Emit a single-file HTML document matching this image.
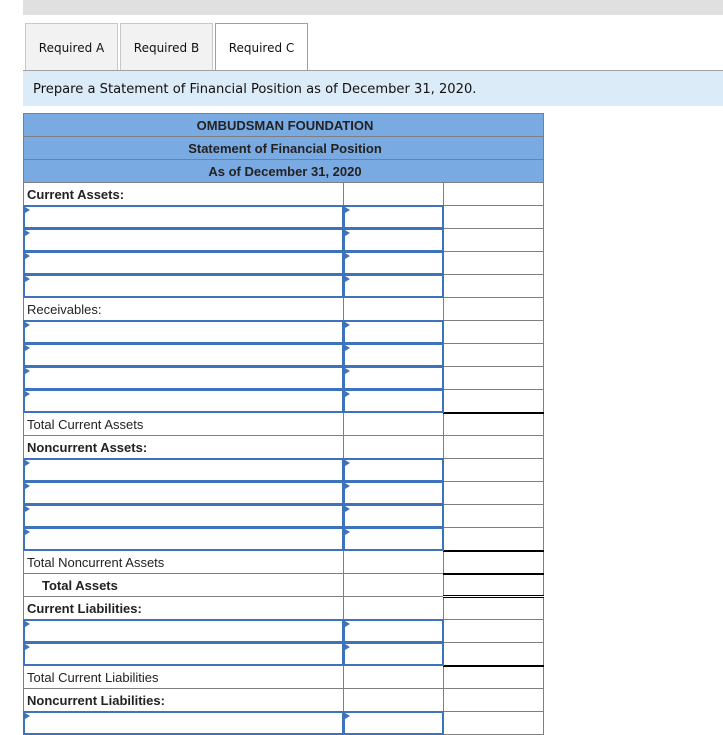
<!DOCTYPE html>
<html><head><meta charset="utf-8"><style>
body{margin:0;background:#fff;font-family:"Liberation Sans",Arial,sans-serif;width:723px;height:731px;overflow:hidden;position:relative}
.top{position:absolute;left:23px;top:0;width:700px;height:15px;background:#e0e0e0}
.tab{position:absolute;top:23px;height:46px;width:91px;border:1px solid #c8c8c8;border-bottom:none;background:#f2f2f2;font-family:"DejaVu Sans",sans-serif;font-size:12px;line-height:48px;text-align:center;color:#111}
.tab.on{background:#fff;border-color:#a0a0a0}
.band{position:absolute;left:23px;top:70px;width:700px;height:36px;background:#dcebf8;border-top:1px solid #a0a0a0;box-sizing:border-box;font-family:"DejaVu Sans",sans-serif;font-size:13.1px;line-height:38px;padding-left:10px;color:#111}
table{position:absolute;left:23px;top:113px;border-collapse:collapse;table-layout:fixed}
td{border:1px solid #7f7f7f;height:22px;padding:0 0 0 3px;font-size:13px;color:#222;position:relative;box-sizing:border-box}
tr{height:23px}
.h td{background:#7aaae2;text-align:center;font-weight:bold;color:#222}
.b{font-weight:bold}
.i{padding:0}
.i:after{content:"";position:absolute;left:-1px;top:-1px;right:-1px;bottom:-1px;border:2px solid #3d72bd}
.i:before{content:"";position:absolute;left:1px;top:1px;border-left:5px solid #3d72bd;border-top:3px solid transparent;border-bottom:3px solid transparent;z-index:2}
.bt{border-top:2px solid #000}
.dbl{border-bottom:3px double #000}
</style></head><body>
<div class="top"></div>
<div class="tab" style="left:25px">Required A</div>
<div class="tab" style="left:120px">Required B</div>
<div class="tab on" style="left:215px;height:47px">Required C</div>
<div class="band">Prepare a Statement of Financial Position as of December 31, 2020.</div>
<table>
<colgroup><col style="width:320px"><col style="width:100px"><col style="width:100px"></colgroup>
<tr class="h"><td colspan="3">OMBUDSMAN FOUNDATION</td></tr>
<tr class="h"><td colspan="3">Statement of Financial Position</td></tr>
<tr class="h"><td colspan="3">As of December 31, 2020</td></tr>
<tr><td class="b">Current Assets:</td><td></td><td></td></tr>
<tr><td class="i"></td><td class="i"></td><td></td></tr>
<tr><td class="i"></td><td class="i"></td><td></td></tr>
<tr><td class="i"></td><td class="i"></td><td></td></tr>
<tr><td class="i"></td><td class="i"></td><td></td></tr>
<tr><td>Receivables:</td><td></td><td></td></tr>
<tr><td class="i"></td><td class="i"></td><td></td></tr>
<tr><td class="i"></td><td class="i"></td><td></td></tr>
<tr><td class="i"></td><td class="i"></td><td></td></tr>
<tr><td class="i"></td><td class="i"></td><td></td></tr>
<tr><td>Total Current Assets</td><td></td><td class="bt"></td></tr>
<tr><td class="b">Noncurrent Assets:</td><td></td><td></td></tr>
<tr><td class="i"></td><td class="i"></td><td></td></tr>
<tr><td class="i"></td><td class="i"></td><td></td></tr>
<tr><td class="i"></td><td class="i"></td><td></td></tr>
<tr><td class="i"></td><td class="i"></td><td></td></tr>
<tr><td>Total Noncurrent Assets</td><td></td><td class="bt"></td></tr>
<tr><td class="b" style="padding-left:18px">Total Assets</td><td></td><td class="bt dbl"></td></tr>
<tr><td class="b">Current Liabilities:</td><td></td><td></td></tr>
<tr><td class="i"></td><td class="i"></td><td></td></tr>
<tr><td class="i"></td><td class="i"></td><td></td></tr>
<tr><td>Total Current Liabilities</td><td></td><td class="bt"></td></tr>
<tr><td class="b">Noncurrent Liabilities:</td><td></td><td></td></tr>
<tr><td class="i"></td><td class="i"></td><td></td></tr>
</table>
</body></html>
